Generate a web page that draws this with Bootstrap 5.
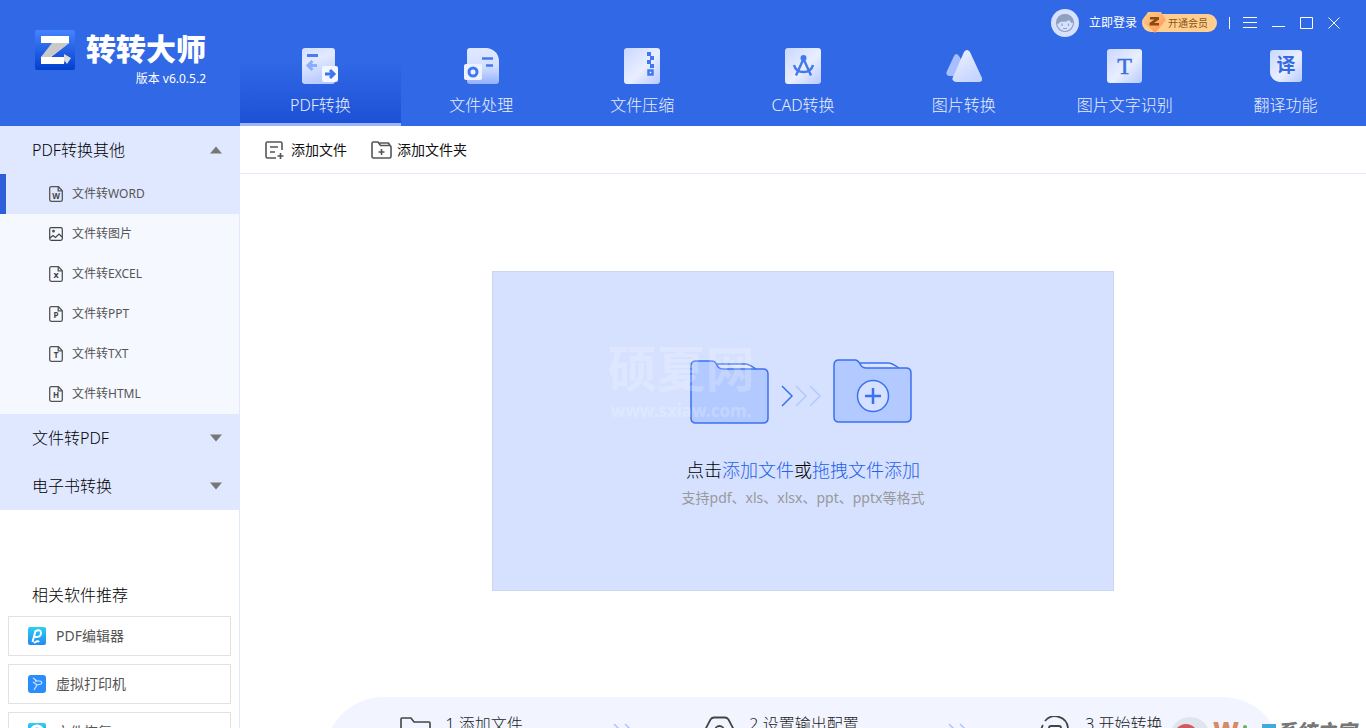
<!DOCTYPE html>
<html lang="zh-CN">
<head>
<meta charset="utf-8">
<meta name="viewport" content="width=device-width, initial-scale=1">
<title>转转大师</title>
<link href="https://cdn.jsdelivr.net/npm/bootstrap@5.3.0/dist/css/bootstrap.min.css" rel="stylesheet">
<style>
  body { font-family: "Noto Sans", "Noto Sans CJK SC", sans-serif; font-size: 14px; font-weight: 400; line-height: 24px; color: #111; background: #fff; }
  a, a:hover { text-decoration: none; }
  button { font: inherit; color: inherit; background: none; border: 0; padding: 0; }
  svg { display: block; flex: none; }
  .side-w { width: 240px; flex: none; }
  .app-header { background: #3168e6; color: #fff; }
  .brand-box { padding: 30px 34px 0 35px; }
  .brand-name { font-size: 30px; font-weight: 900; line-height: 38px; white-space: nowrap; }
  .brand-ver { font-size: 12px; line-height: 18px; text-align: right; }
  .title-row { height: 46px; padding-right: 26px; }
  .title-row, .title-row a { font-size: 12px; color: #fff; }
  .title-row a { gap: 10px; }
  .win-btns { gap: 15px; margin-left: 9px; }
  .vip-pill { background: #ffcf90; color: #8a5316; border-radius: 13px; height: 18px; line-height: 18px; font-size: 10px; padding: 0 9px 0 26px; position: relative; margin-left: 5px; }
  .vip-pill svg { position: absolute; left: 0; top: -2px; }
  .func-tab { flex: 1 1 0; height: 80px; padding-top: 1px; font-size: 16px; font-weight: 300; color: #e9efff; border-bottom: 3px solid transparent; white-space: nowrap; }
  .func-tab:hover { color: #fff; }
  .func-tab span { margin-top: 8px; }
  .func-tab.active { background: linear-gradient(#3168e6 20%, #1d51d6); border-color: #9bb5fb; }
  .side-panel { border-right: 1px solid #e0e8ff; }
  .group-head { background: #e0e8ff; height: 48px; width: 100%; padding: 0 17px 0 32px; font-size: 16px; font-weight: 300; color: #000; }
  .sub-link { height: 40px; padding-left: 49px; gap: 9px; font-size: 12px; color: #555; background: #f5f8ff; }
  .sub-link.active { background: #e0e8ff; box-shadow: inset 6px 0 #2c5fd8; }
  .rec-title { font-size: 16px; line-height: 24px; font-weight: 300; color: #000; margin: 73px 0 9px 32px; }
  .rec-link { height: 40px; border: 1px solid #e2e2e2; margin: 0 8px 8px; padding-left: 19px; gap: 10px; color: #555; }
  .tool-row { height: 48px; padding-left: 25px; gap: 24px; border-bottom: 1px solid #e0e8ff; }
  .drop-zone { width: 55.3%; min-height: 320px; margin-top: 97px; background: #d5e1ff; border: 1px solid #cbd7f2; padding-top: 86px; }
  .drop-main { font-size: 18px; font-weight: 300; color: #000; line-height: 28px; margin-top: 30px; }
  .drop-main a { color: #2560ea; }
  .drop-note { color: #999; margin-top: 2px; }
  .zone-mark { left: 115px; top: 66px; color: #fff; opacity: .22; font-weight: 700; }
  .zone-mark div { font-size: 49px; line-height: 60px; }
  .zone-mark p { font-size: 17px; line-height: 26px; margin: 0; padding-left: 3px; }
  .step-bar { width: 85%; height: 120px; margin-top: 106px; border-radius: 60px; background: #f2f5ff; padding: 15px 119px 0 76px; font-size: 16px; font-weight: 300; color: #222; white-space: nowrap; }
  .step-bar .step-item { gap: 14px; }
  .site-mark { right: 10px; bottom: -29px; gap: 10px; }
  .site-mark b { font-size: 20px; color: #777; font-style: italic; font-weight: 900; line-height: 30px; }
</style>
</head>
<body>
<svg width="0" height="0" class="position-absolute" aria-hidden="true">
  <defs>
    <linearGradient id="gTile" x1="0" y1="0" x2="1" y2="1"><stop offset="0" stop-color="#c9d7ff"/><stop offset=".55" stop-color="#e9efff"/><stop offset="1" stop-color="#b7c9ff"/></linearGradient>
    <linearGradient id="gDown" x1="0" y1="0" x2="0" y2="1"><stop offset="0" stop-color="#dfe8ff"/><stop offset=".5" stop-color="#d4e0ff"/><stop offset="1" stop-color="#93b2ff"/></linearGradient>
    <linearGradient id="gPage" x1="0" y1="0" x2=".3" y2="1"><stop offset="0" stop-color="#d3dfff"/><stop offset=".4" stop-color="#e2eaff"/><stop offset="1" stop-color="#b9cbff"/></linearGradient>
    <linearGradient id="gPeak" x1="0" y1="0" x2=".6" y2="1"><stop offset="0" stop-color="#eef3ff"/><stop offset="1" stop-color="#c6d5ff"/></linearGradient>
    <linearGradient id="gLogo" x1="0" y1="0" x2="0" y2="1"><stop offset="0" stop-color="#4683ff"/><stop offset="1" stop-color="#0140cc"/></linearGradient>
    <linearGradient id="gGem" x1="0" y1="0" x2="1" y2="1"><stop offset="0" stop-color="#ffd48b"/><stop offset="1" stop-color="#ff8d55"/></linearGradient>
    <linearGradient id="gApp" x1="0" y1="0" x2="0" y2="1"><stop offset="0" stop-color="#2ad0f2"/><stop offset="1" stop-color="#2489f4"/></linearGradient>
    <g id="docIcon" fill="none" stroke="#555" stroke-width="1.3"><path d="M2.6.7h6.9l3.8 4v9a1.6 1.6 0 0 1-1.6 1.6H2.3A1.6 1.6 0 0 1 .7 13.700V2.300A1.600 1.600 0 0 1 2.600.7z"/><path d="M9.200.8v4h4"/></g>
  </defs>
</svg>
<div class="vh-100 d-flex flex-column overflow-hidden position-relative">
  <header class="app-header d-flex">
    <div class="side-w brand-box">
      <div class="d-flex">
        <svg width="40" height="40" viewBox="0 0 40 40"><rect width="40" height="40" rx="2" fill="url(#gLogo)"/><path d="M6 6h28v7L16 27h14l-1 7H6v-7l17-14H6z" fill="#fff"/><path d="M17 13h17L16 27H6z" fill="#c9c9c9"/><path d="M29 24l7 4-4 6-3-4z" fill="#ddd"/></svg>
        <div class="brand-name ms-auto">转转大师</div>
      </div>
      <div class="brand-ver">版本 v6.0.5.2</div>
    </div>
    <div class="flex-grow-1">
      <div class="title-row d-flex justify-content-end align-items-center">
        <a href="#" class="d-flex align-items-center">
          <svg width="28" height="28" viewBox="0 0 28 28"><circle cx="14" cy="14" r="14" fill="#d5e1ff"/><circle cx="14" cy="14" r="8.500" fill="none" stroke="#8fa0c0" stroke-width="1.200"/><path d="M5.500 14a8.500 8.500 0 0 1 17-1l-2 1-2.500-3c-2 2-6 2-8 1.500L7 15z" fill="#8fa0c0"/><path d="M11 14.500v2.500M17.500 14.500v2.500M12 19.500h4" stroke="#8fa0c0" stroke-width="1.200"/></svg>
          立即登录</a>
        <button type="button" class="vip-pill"><svg width="24" height="22" viewBox="0 0 24 22"><path d="M6 0h13l5 8-11 13L0 9z" fill="url(#gGem)"/><path d="M8 5h9v2.500L12 11h5v2.500H7.500V11l5-3.500H8z" fill="#8a4a10"/></svg>开通会员</button>
        <svg class="ms-2" width="9" height="14"><path d="M4.500 1v12" stroke="#fff"/></svg>
        <div class="win-btns d-flex">
          <button type="button" aria-label="菜单"><svg width="14" height="14"><path d="M0 1.500h14M0 6.500h14M0 11.500h14" stroke="#fff"/></svg></button>
          <button type="button" aria-label="最小化"><svg width="13" height="14"><path d="M0 10.500h13" stroke="#fff"/></svg></button>
          <button type="button" aria-label="最大化"><svg width="13" height="14"><path d="M.5 1.500h12v11H.5z" fill="none" stroke="#fff"/></svg></button>
          <button type="button" aria-label="关闭"><svg width="12" height="14"><path d="M.5 1.500l11 11M11.500 1.500l-11 11" stroke="#fff"/></svg></button>
        </div>
      </div>
      <nav class="d-flex">
        <a href="#" class="func-tab active d-flex flex-column align-items-center"><svg width="38" height="38" viewBox="0 0 38 38"><rect x="1" y="1" width="33" height="36" rx="3" fill="url(#gPage)"/><path d="M6 8.500h11" stroke="#4a7cf0" stroke-width="3"/><path d="M7 18.500h9M11.500 14l-4.500 4.500 4.500 4.500" fill="none" stroke="#8badff" stroke-width="3"/><rect x="21" y="19" width="16" height="16" rx="2" fill="#f3f7ff"/><path d="M24 27h8M29 23l4 4-4 4" fill="none" stroke="#3f74ee" stroke-width="3"/></svg><span>PDF转换</span></a>
        <a href="#" class="func-tab d-flex flex-column align-items-center"><svg width="35" height="38" viewBox="0 0 35 38"><path d="M6 1h17c7 1 12 6 12 13v20a3 3 0 0 1-3 3H6a3 3 0 0 1-3-3V4a3 3 0 0 1 3-3z" fill="url(#gDown)"/><path d="M18 11.500h11M22 18.500h7" stroke="#4377ed" stroke-width="2.600"/><rect y="17" width="18" height="16" rx="2" fill="#edf2ff"/><circle cx="9" cy="25" r="4" fill="none" stroke="#4377ed" stroke-width="3"/></svg><span>文件处理</span></a>
        <a href="#" class="func-tab d-flex flex-column align-items-center"><svg width="36" height="38" viewBox="0 0 36 38"><rect y="1" width="36" height="36" rx="3" fill="url(#gTile)"/><path d="M23 5h4v4h3v4h-3v4h3v4h-4v-4h-3v-4h3V9h-3z" fill="#4377ed"/><path d="M24.500 23.500h4v4h-4z" fill="#fff" stroke="#4377ed" stroke-width="2.500"/></svg><span>文件压缩</span></a>
        <a href="#" class="func-tab d-flex flex-column align-items-center"><svg width="36" height="38" viewBox="0 0 36 38"><rect y="1" width="36" height="36" rx="3" fill="url(#gTile)"/><g fill="none" stroke="#4377ed" stroke-width="2.400"><circle cx="18.500" cy="11" r="1.800" fill="#4377ed"/><path d="M18 13l-7 15.500M19 13l7 15.500M9 18c1 4 3 7 9.500 7s8.500-3 9.500-7"/></g></svg><span>CAD转换</span></a>
        <a href="#" class="func-tab d-flex flex-column align-items-center"><svg width="36" height="38" viewBox="0 0 36 38"><path d="M8 9q2-4 5 0l3 5-6 15H3q-4-1-2-5z" fill="#a8bfff"/><path d="M18 5q3-4 6 0l12 26q1 4-3 4H10q-5-1-3-5z" fill="url(#gPeak)"/></svg><span>图片转换</span></a>
        <a href="#" class="func-tab d-flex flex-column align-items-center"><svg width="36" height="38" viewBox="0 0 36 38"><rect y="2" width="35" height="34" rx="3" fill="url(#gTile)"/><text x="17.500" y="27" text-anchor="middle" font-family="Liberation Serif, serif" font-weight="400" font-size="24" fill="#3e70e0" stroke="#3e70e0" stroke-width=".5">T</text></svg><span>图片文字识别</span></a>
        <a href="#" class="func-tab d-flex flex-column align-items-center"><svg width="34" height="38" viewBox="0 0 34 38"><path d="M4 3h26a3 3 0 0 1 3 3v26a3 3 0 0 1-3 3H10q-8-2-9-9V6a3 3 0 0 1 3-3z" fill="url(#gTile)"/><text x="17" y="25" text-anchor="middle" font-weight="700" font-size="19" fill="#3569e2">译</text></svg><span>翻译功能</span></a>
      </nav>
    </div>
  </header>
  <div class="d-flex flex-grow-1" style="min-height:0">
    <aside class="side-w side-panel overflow-hidden">
      <button type="button" class="group-head d-flex align-items-center justify-content-between">PDF转换其他<svg width="12" height="8"><path d="M0 7.500l6-7 6 7z" fill="#777"/></svg></button>
      <a href="#" class="sub-link active d-flex align-items-center"><svg width="14" height="16"><use href="#docIcon"/><text x="7" y="13" text-anchor="middle" font-size="8" font-weight="700" fill="#444">W</text></svg>文件转WORD</a>
      <a href="#" class="sub-link d-flex align-items-center"><svg width="14" height="14" fill="none" stroke="#444" stroke-width="1.200"><rect x=".7" y=".7" width="12.600" height="12.600" rx="1.500"/><circle cx="4.500" cy="4.200" r=".8"/><path d="M1 11l3-2.500 2.500 2 3.500-3.500 3 3"/></svg>文件转图片</a>
      <a href="#" class="sub-link d-flex align-items-center"><svg width="14" height="16"><use href="#docIcon"/><text x="7" y="12" text-anchor="middle" font-size="9" font-weight="700" fill="#444">x</text></svg>文件转EXCEL</a>
      <a href="#" class="sub-link d-flex align-items-center"><svg width="14" height="16"><use href="#docIcon"/><text x="7" y="12" text-anchor="middle" font-size="8" font-weight="700" fill="#444">P</text></svg>文件转PPT</a>
      <a href="#" class="sub-link d-flex align-items-center"><svg width="14" height="16"><use href="#docIcon"/><text x="7" y="12" text-anchor="middle" font-size="8" font-weight="700" fill="#444">T</text></svg>文件转TXT</a>
      <a href="#" class="sub-link d-flex align-items-center"><svg width="14" height="16"><use href="#docIcon"/><text x="7" y="12" text-anchor="middle" font-size="8" font-weight="700" fill="#444">H</text></svg>文件转HTML</a>
      <button type="button" class="group-head d-flex align-items-center justify-content-between">文件转PDF<svg width="12" height="8"><path d="M0 .5l6 7 6-7z" fill="#777"/></svg></button>
      <button type="button" class="group-head d-flex align-items-center justify-content-between">电子书转换<svg width="12" height="8"><path d="M0 .5l6 7 6-7z" fill="#777"/></svg></button>
      <h2 class="rec-title">相关软件推荐</h2>
      <a href="#" class="rec-link d-flex align-items-center"><svg width="18" height="18"><rect width="18" height="18" rx="2" fill="url(#gApp)"/><path d="M4.500 15L7.500 4M7 4.500q6-3 6 1.500t-6 4M6 16q4-3 5-1" fill="none" stroke="#fff" stroke-width="2"/></svg>PDF编辑器</a>
      <a href="#" class="rec-link d-flex align-items-center"><svg width="18" height="18"><rect width="18" height="18" rx="3" fill="#2b8dfb"/><path d="M5 3l4 3h3q3 1 1 3l-4 1-3 5M5 7l4 3M7 4l1 3" fill="none" stroke="#c5e3ff" stroke-width="1.200"/></svg>虚拟打印机</a>
      <a href="#" class="rec-link d-flex align-items-center"><svg width="18" height="18"><rect width="18" height="18" rx="2" fill="url(#gApp)"/><circle cx="9" cy="9" r="6" fill="none" stroke="#fff" stroke-width="3"/></svg>文件恢复</a>
    </aside>
    <main class="flex-grow-1 d-flex flex-column align-items-center overflow-hidden">
      <div class="tool-row w-100 flex-shrink-0 d-flex align-items-center">
        <button type="button" class="d-flex align-items-center" style="gap:7px"><svg width="19" height="18" fill="none" stroke="#555" stroke-width="1.600"><path d="M17 9V2.500A1.500 1.500 0 0 0 15.500 1h-13A1.500 1.500 0 0 0 1 2.500v13A1.500 1.500 0 0 0 2.500 17H11M5 6h8M5 11h5M15.500 12v6M12.500 15h6"/></svg>添加文件</button>
        <button type="button" class="d-flex align-items-center" style="gap:5px"><svg width="21" height="18" fill="none" stroke="#555" stroke-width="1.600"><path d="M1 2.500Q1 1 2.500 1H7l2.500 3.500h9q1.500 0 1.500 1.500v9.500q0 1.500-1.500 1.500h-16Q1 17 1 15.500zM8.500 2h9L19 4.500M7.500 11h6M10.500 8v6"/></svg>添加文件夹</button>
      </div>
      <section class="drop-zone flex-shrink-0 position-relative d-flex flex-column align-items-center">
        <svg width="228" height="68" viewBox="0 0 228 68" fill="none" stroke="#3b70f2" stroke-width="1.500">
          <g id="folderShape"><path d="M28 6h28q4 0 11 5" fill="#dfe8ff"/><path d="M2 8q0-5 5-5h16q3 0 5 4 2 4 6 4h40q5 0 5 5v44q0 5-5 5H7q-5 0-5-5z" fill="#b2caff"/></g>
          <path d="M93 28l10 10-10 10"/><path d="M107 28l10 10-10 10M121 28l10 10-10 10" stroke="#b2caff"/>
          <use href="#folderShape" x="143" y="-1"/>
          <circle cx="184" cy="38" r="15.500" fill="#d5e1ff"/><path d="M176 38h16M184 30v16" stroke-width="2.500"/>
        </svg>
        <div class="drop-main">点击<a href="#">添加文件</a>或<a href="#">拖拽文件添加</a></div>
        <div class="drop-note">支持pdf、xls、xlsx、ppt、pptx等格式</div>
        <div class="zone-mark position-absolute pe-none"><div>硕夏网</div><p>www.sxiaw.com.</p></div>
      </section>
      <section class="step-bar flex-shrink-0 d-flex justify-content-between align-items-start">
        <div class="step-item d-flex"><svg width="31" height="28" fill="none" stroke="#444" stroke-width="1.600"><path d="M1 28V7q0-1 1-1h9l3 4h15q1 0 1 1v17"/></svg>1 添加文件</div>
        <svg class="ms-3" width="20" height="24" fill="none" stroke="#adc4ff" stroke-width="1.500"><path d="M2 12l5 5-5 6M13 12l5 5-5 6"/></svg>
        <div class="step-item d-flex"><svg class="mt-1" width="31" height="28" fill="none" stroke="#444" stroke-width="1.800"><path d="M10 1.500h11q2 0 3.500 2L30 14l-5.500 10q-1.500 2-3.500 2H10q-2 0-3.500-2L1 14 6.500 3.500q1.500-2 3.500-2z"/><circle cx="15.500" cy="14.500" r="4.500"/></svg>2 设置输出配置</div>
        <svg class="ms-3" width="20" height="24" fill="none" stroke="#adc4ff" stroke-width="1.500"><path d="M2 12l5 5-5 6M13 12l5 5-5 6"/></svg>
        <div class="step-item d-flex"><svg class="mt-1" width="31" height="28" fill="none" stroke="#444" stroke-width="1.800"><path d="M5 5a13 13 0 0 1 23 7M1.500 16Q1 12 3 9M9 18v-6q0-2 2-2h8q2 0 2 2v6z"/></svg>3 开始转换</div>
      </section>
    </main>
  </div>
  <div class="site-mark position-absolute d-flex pe-none">
    <svg width="82" height="40"><circle cx="20" cy="20" r="20" fill="#dfe4ee"/><circle cx="16" cy="19" r="12" fill="#d05a5e"/><text x="43" y="23" font-size="25" font-weight="900" fill="#d68a66">W</text><circle cx="75" cy="10" r="2" fill="#6fae5a"/></svg>
    <div class="d-flex"><svg width="14" height="30"><path d="M0 7h14v5H0z" fill="#45a7dc"/></svg><b>系统之家</b></div>
  </div>
</div>
<script src="https://cdn.jsdelivr.net/npm/bootstrap@5.3.0/dist/js/bootstrap.bundle.min.js"></script>
</body>
</html>
